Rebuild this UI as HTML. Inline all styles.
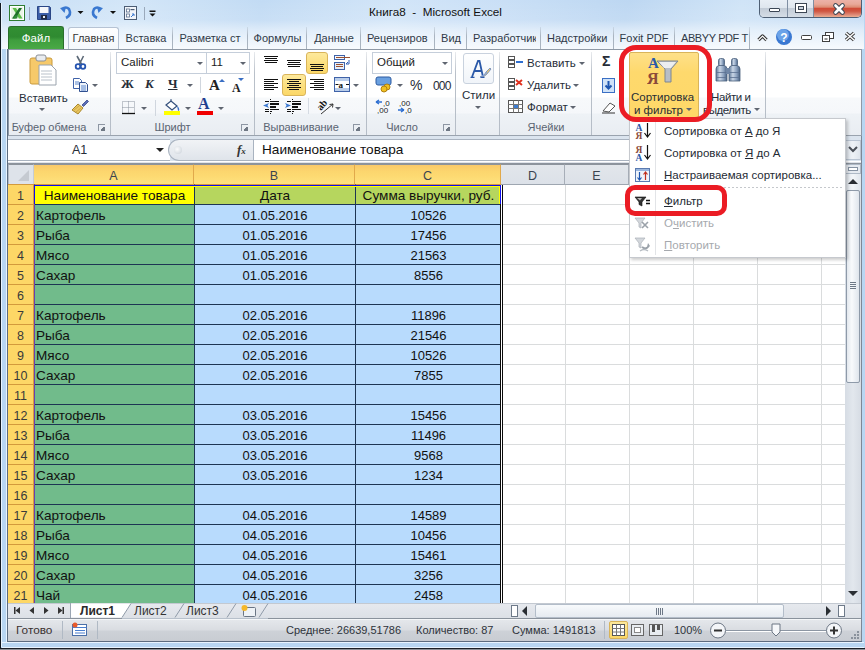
<!DOCTYPE html>
<html><head><meta charset="utf-8">
<style>
*{margin:0;padding:0;box-sizing:border-box}
html,body{width:865px;height:650px;overflow:hidden}
body{position:relative;font-family:"Liberation Sans",sans-serif;background:#c4d8ee;color:#1e1e1e}
.a{position:absolute}
#frame{position:absolute;left:0;top:0;width:865px;height:650px;background:#b8d6f2}
#titlebar{position:absolute;left:1px;top:0px;width:863px;height:49px;
 background:linear-gradient(180deg,rgba(255,255,255,0) 0px,rgba(255,255,255,0.1) 20px,rgba(255,255,255,0.45) 30px,rgba(255,255,255,0.85) 49px),
 linear-gradient(100deg,#c8dff5 0%,#d3e6f8 15%,#c2dbf4 30%,#d2e5f8 45%,#c9dff6 58%,#bdd7f2 72%,#d0e4f7 85%,#c6ddf5 100%)}
.title{position:absolute;top:5px;left:3px;width:865px;text-align:center;font-size:11.7px;color:#111}
/* tabs */
.tab{position:absolute;top:28px;height:21px;font-size:11px;color:#303a48;text-align:center;line-height:20px;white-space:nowrap;overflow:hidden}
.tsep{position:absolute;top:27px;width:1px;height:22px;background:linear-gradient(180deg,rgba(169,180,192,0.3),#a9b4c0 40%)}
#filetab{position:absolute;left:8px;top:26px;width:56px;height:23px;border-radius:3px 3px 0 0;
 background:linear-gradient(180deg,#328f33 0%,#2f8a31 45%,#3f9e3e 60%,#4aa946 100%);border:1px solid #2a6f2c;border-bottom:none;color:#fff;font-size:11.5px;text-align:center;line-height:22px}
#hometab{position:absolute;left:68px;top:27px;width:51px;height:23px;background:linear-gradient(180deg,#fdfeff,#f4f8fc);border:1px solid #b6c3d4;border-bottom:none;border-radius:3px 3px 0 0;font-size:11px;color:#333;text-align:center;line-height:21px}
/* ribbon */
#ribbon{position:absolute;left:8px;top:49px;width:854px;height:87px;border:1px solid #8e99a6;border-bottom-color:#9aa3ae;
 background:linear-gradient(180deg,#ffffff 0px,#ffffff 47px,#f7f9fb 48px,#f5f7fa 63px,#eef2f6 64px,#e9edf2 85px)}
.gsep{position:absolute;top:52px;width:1px;height:83px;background:linear-gradient(180deg,rgba(180,188,198,0.3),#b9c0c9 25%,#b5bdc7 100%)}
.glabel{position:absolute;top:120px;height:14px;font-size:11px;color:#5a6472;text-align:center;line-height:14px;white-space:nowrap}
.launch{position:absolute;top:124px;width:7px;height:7px;border-left:1px solid #8d96a3;border-top:1px solid #8d96a3}
.launch:after{content:"";position:absolute;left:2px;top:2px;width:4px;height:4px;background:linear-gradient(135deg,transparent 0,transparent 30%,#6f7884 30%)}
.rt{position:absolute;font-size:11.5px;color:#262d38;white-space:nowrap;line-height:14px}
.dd{position:absolute;width:0;height:0;border-left:3.5px solid transparent;border-right:3.5px solid transparent;border-top:3.5px solid #5f6570}
.combo{position:absolute;height:22px;border:1px solid #c5ceda;background:#fff;font-size:11.5px;line-height:19px;padding-left:4px;color:#1b1b1b}
.hl{position:absolute;background:linear-gradient(180deg,#fde99c,#fbd767);border:1px solid #d9b45a;border-radius:2px}
/* formula bar */
#fbar{position:absolute;left:8px;top:136px;width:853px;height:28px;background:#dbe4ee}
#namebox{position:absolute;left:8px;top:139px;width:162px;height:22px;background:#fff;border:1px solid #a9b3c0;border-left:none;border-right:none}
#fxarea{position:absolute;left:168px;top:139px;width:86px;height:22px;background:linear-gradient(180deg,#f1f3f6,#dfe4ea);border:1px solid #a9b3c0;border-right:none;border-radius:11px 0 0 11px}
#finput{position:absolute;left:253px;top:139px;width:592px;height:22px;background:#fff;border:1px solid #a9b3c0}
/* grid */
#gridbg{position:absolute;left:8px;top:164px;width:837px;height:440px;background:#fff;
 background-image:linear-gradient(90deg,#dadcdd 1px,transparent 1px),linear-gradient(180deg,#dadcdd 1px,transparent 1px);
 background-size:64px 20px,64px 20px;background-position:493px 0,0 0}
.rh{position:absolute;left:8px;width:26px;height:21px;background:#fdd766;border-top:1px solid #d39a3c;border-right:1px solid #d39a3c;font-size:12.5px;color:#3a3a3a;text-align:center;line-height:19px;padding-top:2px;margin-top:-1px}
.ch{position:absolute;top:164px;height:21px;padding-top:1px;border-top:1px solid #8c939c;background:linear-gradient(180deg,#e2e6eb,#dce1e8);border-right:1px solid #a7aeb8;border-bottom:1px solid #9ea6b0;font-size:12.5px;color:#3c4450;text-align:center;line-height:20px}
.ch.sel{background:linear-gradient(180deg,#f9c96a 0%,#fcd66e 35%,#fdda72 60%,#fee27f 100%);border-right:1px solid #e1a94b;border-bottom:1px solid #d59a3b}
.c{position:absolute;height:21px;margin-top:-1px;border:1px solid #1d3553;border-right:none;font-size:13px;line-height:19px;padding-top:1px;color:#111;white-space:nowrap;overflow:hidden}
.cA{background:#71bb8b;border-left-color:#6a3fb0;padding-left:1px;margin-left:0;font-size:13.6px}
.cB{background:#b8dbfd;text-align:center}
.hA1{background:#ffff00 padding-box;border-top-color:transparent;text-align:center;font-size:13.6px}
.hB1{background:#b6d65e padding-box;border-top-color:transparent;text-align:center;font-size:13.6px}
/* scrollbars */
#vscroll{position:absolute;left:845px;top:164px;width:16px;height:440px;background:linear-gradient(90deg,#d6dce4,#e2e7ed 50%,#d6dce4)}
#hbar{position:absolute;left:8px;top:603px;width:853px;height:16px;border-top:1px solid #c3c9d1;border-bottom:1px solid #8a929c;background:linear-gradient(180deg,#e6e9ee,#dce0e6)}
#status{position:absolute;left:8px;top:619px;width:853px;height:22px;border-top:1px solid #f4f6f8;
 background:linear-gradient(180deg,#e4e7eb 0%,#dadde2 45%,#cdd1d7 55%,#c8ccd2 100%)}
.st{position:absolute;top:623px;font-size:11px;color:#2e333a;white-space:nowrap;line-height:14px}
/* menu */
#menu{position:absolute;left:629px;top:118px;width:217px;height:140px;background:#fff;border:1px solid #c6c9ce;box-shadow:2px 2px 3px rgba(0,0,0,0.2)}
#menu .icol{position:absolute;left:25px;top:2px;width:1px;height:134px;background:#e2e4e7}
.mi{position:absolute;left:664px;font-size:11.5px;color:#242a33;white-space:nowrap;line-height:14px}
.mi.dis{color:#a6a9ae}
.u{text-decoration:underline}
.ring{position:absolute;border:4px solid #eb1c24;border-radius:16px}
</style></head><body>
<div id="frame"></div>

<div id="titlebar"></div>
<div class="a" style="left:0;top:3px;width:1px;height:645px;background:#111820"></div>
<div class="a" style="left:1px;top:3px;width:1px;height:644px;background:#e8f4ff"></div>
<div class="a" style="left:6px;top:49px;width:1px;height:593px;background:#e8f4ff"></div>
<div class="a" style="left:7px;top:49px;width:1px;height:593px;background:#5c6c80"></div>
<div class="a" style="left:861px;top:49px;width:1px;height:593px;background:#7d8896"></div>

<div class="a" style="left:7px;top:641px;width:855px;height:1px;background:#5c6c80"></div>
<div class="a" style="left:2px;top:642px;width:862px;height:1px;background:#e8f4ff"></div>
<div class="a" style="left:2px;top:647px;width:862px;height:1px;background:#e8f4ff"></div>
<div class="a" style="left:0;top:648px;width:865px;height:1px;background:#1a1f26"></div>
<div class="a" style="left:0;top:649px;width:865px;height:1px;background:#8a8f96"></div>
<div class="title">Книга8&nbsp; - &nbsp;Microsoft Excel</div>

<!-- quick access -->
<svg class="a" style="left:0;top:0" width="165" height="24" viewBox="0 0 165 24">
 <rect x="9.5" y="5.5" width="15" height="15" fill="#eaf4e6" stroke="#2e7d32"/>
 <rect x="10.5" y="6.5" width="13" height="13" fill="none" stroke="#fff"/>
 <path d="M12.5 8 h3.5 l6.5 10.5 h-3.5z" fill="#5cbc48"/><path d="M22 8 h-3 l-7 10.5 h3.5z" fill="#1f6e2a"/><path d="M13 18.5 l2 -3 h3 l-1 3z" fill="#2e8a38"/>
 <rect x="29" y="7" width="1" height="13" fill="#9aa9bb"/>
 <path d="M37.5 6.5 h12 l1 1 v12 h-13z" fill="#3b5ea8" stroke="#2a4686"/>
 <rect x="39.5" y="7" width="9" height="6" fill="#f4f6fa"/>
 <rect x="41" y="15" width="6" height="4.5" fill="#1e2a44"/><rect x="43" y="16" width="2" height="2" fill="#e9eef6"/>
 <path d="M66 18 q6 -3 3 -9 q-3 -3 -7 0" fill="none" stroke="#3a78d0" stroke-width="2.6"/>
 <path d="M60 8 l6 -1 -1.5 6z" fill="#3a78d0"/>
 <path d="M77.5 11 h6 l-3 3z" fill="#111"/>
 <path d="M97 18 q-6 -3 -3 -9 q3 -3 7 0" fill="none" stroke="#3a78d0" stroke-width="2.6"/>
 <path d="M103 8 l-6 -1 1.5 6z" fill="#3a78d0"/>
 <path d="M110 11 h6 l-3 3z" fill="#111"/>
 <rect x="124.5" y="6.5" width="12" height="13" fill="#f2f5fa" stroke="#4b5c74"/>
 <rect x="126.5" y="9" width="3" height="3" fill="#fff" stroke="#5a6f8c" stroke-width="0.8"/><rect x="130.5" y="9" width="4" height="1.2" fill="#4b5c74"/>
 <rect x="126.5" y="14" width="3" height="3" fill="#fff" stroke="#5a6f8c" stroke-width="0.8"/>
 <path d="M131 17 l3 -3 M132 14 h2 v2" stroke="#3a78d0" fill="none"/>
 <rect x="144" y="7" width="1" height="13" fill="#9aa9bb"/>
 <rect x="149.5" y="10.5" width="6" height="1.5" fill="#111"/><path d="M149.5 13.5 h6 l-3 3z" fill="#111"/>
</svg>

<!-- window buttons -->
<div class="a" style="left:759px;top:0;width:103px;height:18px;border:1px solid #4e5f74;border-top:none;border-radius:0 0 5px 5px;overflow:hidden">
 <div class="a" style="left:0;top:0;width:28px;height:17px;background:linear-gradient(180deg,#e8eef5 0%,#dfe6ee 45%,#c3ccd7 50%,#d5dde6 100%);border-right:1px solid #7f8ea2"></div>
 <div class="a" style="left:28px;top:0;width:26px;height:17px;background:linear-gradient(180deg,#e8eef5 0%,#dfe6ee 45%,#c3ccd7 50%,#d5dde6 100%);border-right:1px solid #7f8ea2"></div>
 <div class="a" style="left:54px;top:0;width:48px;height:17px;background:linear-gradient(180deg,#ecb2a8 0%,#e8a898 25%,#dd8c74 42%,#d04c38 50%,#cf5540 65%,#dd8673 85%,#ecae90 100%)"></div>
 <div class="a" style="left:9px;top:8px;width:11px;height:4px;background:#fff;border:1px solid #3c4654;border-radius:1px"></div>
 <div class="a" style="left:35px;top:3px;width:12px;height:10px;background:#fff;border:1px solid #3c4654"></div>
 <div class="a" style="left:38px;top:6px;width:6px;height:4px;background:#c9d2dc;border:1px solid #3c4654"></div>
 <svg class="a" style="left:72px;top:2px" width="16" height="14" viewBox="0 0 16 14"><path d="M3.5 3.5 L10.5 10.5 M10.5 3.5 L3.5 10.5" stroke="#3c4654" stroke-width="4.6" stroke-linecap="round"/><path d="M3.5 3.5 L10.5 10.5 M10.5 3.5 L3.5 10.5" stroke="#fff" stroke-width="2.6" stroke-linecap="round"/></svg>
</div>

<!-- tabs -->
<div id="filetab">Файл</div>
<div id="hometab">Главная</div>
<div class="tab" style="left:119px;width:54px">Вставка</div>
<div class="tsep" style="left:172px"></div>
<div class="tab" style="left:173px;width:74px">Разметка ст</div>
<div class="tsep" style="left:247px"></div>
<div class="tab" style="left:248px;width:59px">Формулы</div>
<div class="tsep" style="left:306px"></div>
<div class="tab" style="left:307px;width:54px">Данные</div>
<div class="tsep" style="left:360px"></div>
<div class="tab" style="left:361px;width:73px;text-align:left;padding-left:6px">Рецензиров</div>
<div class="tsep" style="left:434px"></div>
<div class="tab" style="left:435px;width:32px">Вид</div>
<div class="tsep" style="left:466px"></div>
<div class="tab" style="left:467px;width:69px;text-align:left;padding-left:6px">Разработчик</div>
<div class="tsep" style="left:540px"></div>
<div class="tab" style="left:541px;width:73px;text-align:left;padding-left:6px">Надстройки</div>
<div class="tsep" style="left:613px"></div>
<div class="tab" style="left:614px;width:60px">Foxit PDF</div>
<div class="tsep" style="left:674px"></div>
<div class="tab" style="left:675px;width:74px;text-align:left;padding-left:6px;letter-spacing:-0.4px">ABBYY PDF T</div>
<div class="tsep" style="left:749px"></div>
<!-- tab row icons -->
<svg class="a" style="left:752px;top:28px" width="110" height="20" viewBox="0 0 110 20">
 <path d="M6.5 12 l4 -4 4 4" fill="none" stroke="#303030" stroke-width="3.2" stroke-linejoin="round"/>
 <path d="M6.5 12 l4 -4 4 4" fill="none" stroke="#fff" stroke-width="1.2"/>
 <circle cx="32" cy="9" r="8" fill="#3a78d2"/><circle cx="31" cy="7" r="6" fill="#6aa2e8"/>
 <text x="32" y="13.5" font-size="12" font-weight="bold" fill="#fff" text-anchor="middle" font-family="Liberation Sans">?</text>
 <rect x="49.5" y="7.5" width="10" height="4" fill="#fff" stroke="#404040" rx="1"/>
 <rect x="73.5" y="4.5" width="8" height="6" fill="#fff" stroke="#404040"/>
 <rect x="70.5" y="7.5" width="7" height="6" fill="#fff" stroke="#404040"/>
 <rect x="72.5" y="10" width="3" height="2" fill="#909090"/>
 <path d="M94 5 L102 12 M102 5 L94 12" stroke="#404040" stroke-width="3.4"/>
 <path d="M94 5 L102 12 M102 5 L94 12" stroke="#fff" stroke-width="1.4"/>
</svg>

<div id="ribbon"></div>
<!-- group separators -->
<div class="gsep" style="left:110px"></div>
<div class="gsep" style="left:254px"></div>
<div class="gsep" style="left:366px"></div>
<div class="gsep" style="left:455px"></div>
<div class="gsep" style="left:499px"></div>
<div class="gsep" style="left:591px"></div>
<div class="gsep" style="left:765px"></div>

<!-- clipboard group -->
<svg class="a" style="left:28px;top:54px" width="30" height="32" viewBox="0 0 30 32">
 <rect x="2" y="4" width="22" height="26" rx="2" fill="#f6c96a" stroke="#c99a3c"/>
 <rect x="8" y="1" width="10" height="6" rx="2" fill="#e9ecf0" stroke="#8a8f96"/>
 <path d="M11 11 h12 l5 5 v15 h-17z" fill="#fff" stroke="#9aa3ad"/>
 <path d="M13 17h11M13 20h11M13 23h11M13 26h11" stroke="#b9c1ca"/>
</svg>
<div class="rt" style="left:19px;top:91px">Вставить</div>
<div class="dd" style="left:39px;top:108px"></div>
<svg class="a" style="left:72px;top:54px" width="18" height="18" viewBox="0 0 18 18">
 <path d="M5 2 L10 11 M11.5 2 L7 11" stroke="#5d6a78" stroke-width="1.6"/>
 <circle cx="6" cy="12.5" r="2.3" fill="none" stroke="#2554b0" stroke-width="1.8"/>
 <circle cx="11" cy="12.5" r="2.3" fill="none" stroke="#2554b0" stroke-width="1.8"/>
</svg>
<svg class="a" style="left:72px;top:77px" width="18" height="16" viewBox="0 0 18 16">
 <path d="M1.5 1.5 h6 l2 2 v8 h-8z" fill="#fff" stroke="#3f62a8"/>
 <path d="M7.5 5.5 h6 l2 2 v7 h-8z" fill="#eef3fb" stroke="#2f4f90"/>
 <path d="M3 5h4M3 7h4M9 9h5M9 11h5M9 13h5" stroke="#5a86cc"/>
</svg>
<div class="dd" style="left:92px;top:84px"></div>
<svg class="a" style="left:71px;top:99px" width="18" height="16" viewBox="0 0 18 16">
 <path d="M11 6 l5 -5 1.5 1.5 -5 5z" fill="#5a6db8" stroke="#3a4a8a" stroke-width="0.8"/>
 <path d="M1 11 l6 -6 5 4 -5 6z" fill="#e9c660" stroke="#a8862a"/>
 <path d="M3 11 l5 -4 M5 13 l5 -4" stroke="#c9a040" stroke-width="0.8"/>
</svg>
<div class="glabel" style="left:9px;width:80px">Буфер обмена</div>
<div class="launch" style="left:98px"></div>

<!-- font group -->
<div class="combo" style="left:116px;top:52px;width:91px">Calibri</div>
<div class="dd" style="left:197px;top:62px"></div>
<div class="combo" style="left:206px;top:52px;width:44px">11</div>
<div class="dd" style="left:240px;top:62px"></div>
<div class="rt" style="left:121px;top:77px;font-weight:bold;font-size:13px;font-family:'Liberation Serif',serif">Ж</div>
<div class="rt" style="left:145px;top:77px;font-style:italic;font-weight:bold;font-size:13px;font-family:'Liberation Serif',serif">К</div>
<div class="rt" style="left:168px;top:77px;font-size:13px;font-weight:bold;font-family:'Liberation Serif',serif;text-decoration:underline">Ч</div>
<div class="dd" style="left:187px;top:84px"></div>
<div class="a" style="left:200px;top:77px;width:1px;height:16px;background:#d0d6de"></div>
<div class="rt" style="left:209px;top:78px;font-size:15px;font-weight:bold;font-family:'Liberation Serif',serif;color:#222">A</div>
<div class="rt" style="left:232px;top:81px;font-size:12px;font-weight:bold;font-family:'Liberation Serif',serif;color:#222">A</div>
<svg class="a" style="left:217px;top:77px" width="30" height="6"><path d="M2 5 l3 -3 3 3z" fill="#3a6fc4"/><path d="M21 1 l6 0 -3 3z" fill="#3a6fc4"/></svg>
<svg class="a" style="left:121px;top:100px" width="16" height="15" viewBox="0 0 16 15">
 <path d="M1.5 1.5h12v12h-12z M7.5 1.5v12 M1.5 7.5h12" fill="none" stroke="#8a939e" stroke-dasharray="1 1"/>
 <path d="M1 13.5h13" stroke="#111" stroke-width="1.3"/>
</svg>
<div class="dd" style="left:141px;top:107px"></div>
<div class="a" style="left:155px;top:100px;width:1px;height:16px;background:#d0d6de"></div>
<svg class="a" style="left:163px;top:98px" width="18" height="18" viewBox="0 0 18 18">
 <path d="M3 7 l5 -4 6 5 -5 4z" fill="#fff" stroke="#34507c" stroke-width="1.2"/>
 <path d="M8 3 v-2" stroke="#34507c"/>
 <path d="M14 8 q3 2 2 5 l-1 -0.5z" fill="#3a6fc4"/>
 <rect x="1" y="13" width="16" height="4" fill="#ffff00"/>
</svg>
<div class="dd" style="left:185px;top:107px"></div>
<div class="rt" style="left:198px;top:97px;font-size:16px;font-weight:bold;font-family:'Liberation Serif',serif;color:#1f3f8f">A</div>
<div class="a" style="left:197px;top:111px;width:16px;height:4px;background:#f00000"></div>
<div class="dd" style="left:218px;top:107px"></div>
<div class="glabel" style="left:150px;width:45px">Шрифт</div>
<div class="launch" style="left:241px"></div>

<!-- alignment -->
<div class="hl" style="left:306px;top:52px;width:22px;height:22px;border-radius:3px"></div>
<div class="hl" style="left:282px;top:74px;width:24px;height:22px;border-radius:3px"></div>
<svg class="a" style="left:254px;top:48px" width="112" height="72" viewBox="0 0 112 72">
 <path d="M10 8.5h14 M11.0 10.5h12 M10 12.5h14 M11.0 14.5h12 M33 12.5h14 M34.0 14.5h12 M33 16.5h14 M34.0 18.5h12 M56 16.5h14 M57.0 18.5h12 M56 20.5h14 M57.0 22.5h12" stroke="#111"/>
 <path d="M10 31.5h14 M10 33.5h10 M10 35.5h14 M10 37.5h10 M10 39.5h14 M10 41.5h10 M33 31.5h14 M35.0 33.5h10 M33 35.5h14 M35.0 37.5h10 M33 39.5h14 M35.0 41.5h10 M56 31.5h14 M60 33.5h10 M56 35.5h14 M60 37.5h10 M56 39.5h14 M60 41.5h10" stroke="#111"/>
 <rect x="80.5" y="7.5" width="10" height="4" fill="#f4f7fb" stroke="#3f62a8"/>
 <path d="M82 9.5h14" stroke="#9a5030"/>
 <rect x="80.5" y="14.5" width="10" height="7" fill="#e7eef8" stroke="#3f62a8"/>
 <path d="M82 16.5h7M82 18.5h7" stroke="#9a5030"/>
 <path d="M95 12 v4 h-3 M92 16 l2 -2" stroke="#2f5fb8" fill="none"/>
 <rect x="80.5" y="29.5" width="15" height="14" fill="#fff" stroke="#3f62a8"/>
 <rect x="81" y="30" width="14" height="3" fill="#b9cdea"/><rect x="81" y="40" width="14" height="3" fill="#b9cdea"/>
 <text x="84.5" y="40" font-size="9" font-weight="bold" font-family="Liberation Serif" fill="#111">a</text>
 <path d="M81.5 36.5h3 M92 36.5h3" stroke="#111"/>
 <rect x="16" y="51" width="1" height="1" fill="#111"/><rect x="16" y="65" width="1" height="1" fill="#111"/> <rect x="11" y="53" width="4" height="1" fill="#111"/><rect x="11" y="61" width="4" height="1" fill="#111"/><rect x="11" y="63" width="4" height="1" fill="#111"/> <rect x="16" y="53" width="9" height="1" fill="#111"/><rect x="16" y="55" width="9" height="2" fill="#111"/><rect x="16" y="58" width="6" height="2" fill="#111"/><rect x="16" y="61" width="9" height="1" fill="#111"/><rect x="16" y="63" width="2" height="1" fill="#111"/> <path d="M15 55 l-6 2.5 6 2.5 -1.5 -2.5z" fill="#3a78d0"/>
 <rect x="38" y="51" width="1" height="1" fill="#111"/><rect x="38" y="65" width="1" height="1" fill="#111"/> <rect x="33" y="53" width="4" height="1" fill="#111"/><rect x="33" y="61" width="4" height="1" fill="#111"/><rect x="33" y="63" width="4" height="1" fill="#111"/> <rect x="38" y="53" width="9" height="1" fill="#111"/><rect x="38" y="55" width="9" height="2" fill="#111"/><rect x="38" y="58" width="6" height="2" fill="#111"/><rect x="38" y="61" width="9" height="1" fill="#111"/><rect x="38" y="63" width="2" height="1" fill="#111"/> <path d="M31 55 l6 2.5 -6 2.5 1.5 -2.5z" fill="#3a78d0"/>
 <path d="M54.5 50 v16" stroke="#d5dbe3"/>
 <text x="0" y="0" font-size="10" font-weight="bold" font-family="Liberation Serif" fill="#111" transform="translate(67 63) rotate(-50)">ab</text>
 <path d="M67 66 l12 -10 M79 56 l-3.5 0.5 M79 56 l-0.5 3.5" stroke="#333" fill="none"/>
</svg>
<div class="dd" style="left:353px;top:84px"></div>
<div class="dd" style="left:335px;top:107px"></div>
<div class="glabel" style="left:258px;width:86px">Выравнивание</div>
<div class="launch" style="left:353px"></div>

<!-- number -->
<div class="combo" style="left:372px;top:52px;width:80px">Общий</div>
<div class="dd" style="left:442px;top:62px"></div>
<svg class="a" style="left:375px;top:76px" width="20" height="17" viewBox="0 0 20 17">
 <rect x="1" y="1" width="15" height="8" rx="2" fill="#6aa0e0" stroke="#2c5aa0"/>
 <circle cx="12" cy="11" r="3" fill="#f0c020" stroke="#b08010"/><circle cx="9" cy="13" r="3" fill="#f0c020" stroke="#b08010"/>
</svg>
<div class="dd" style="left:397px;top:84px"></div>
<div class="rt" style="left:410px;top:78px;font-size:14px">%</div>
<div class="rt" style="left:433px;top:79px;font-size:12px;letter-spacing:-0.8px">000</div>
<svg class="a" style="left:374px;top:98px" width="42" height="16" viewBox="0 0 42 16">
 <path d="M2 4 h6 M2 4 l3 -2 M2 4 l3 2" stroke="#2e6fd1" stroke-width="1.5" fill="none"/>
 <text x="9" y="8" font-size="8" font-family="Liberation Sans" fill="#222">,0</text>
 <text x="3" y="15" font-size="8" font-family="Liberation Sans" fill="#222">,00</text>
 <text x="25" y="8" font-size="8" font-family="Liberation Sans" fill="#222">,00</text>
 <path d="M24 12 h6 M30 12 l-3 -2 M30 12 l-3 2" stroke="#2e6fd1" stroke-width="1.5" fill="none"/>
 <text x="31" y="15" font-size="8" font-family="Liberation Sans" fill="#222">,0</text>
</svg>
<div class="glabel" style="left:385px;width:34px">Число</div>
<div class="launch" style="left:443px"></div>

<!-- styles -->
<div class="a" style="left:463px;top:53px;width:31px;height:31px;border:1px solid #c9d2de;border-radius:3px;background:linear-gradient(180deg,#fff,#f0f4f9)"></div>
<svg class="a" style="left:468px;top:58px" width="24" height="22" viewBox="0 0 24 22">
 <path d="M4 19 L10 3 L11.5 3 L15 19 M6.5 13 h7" fill="none" stroke="#2a58a8" stroke-width="1.8"/>
 <path d="M2.5 19.3 h4 M12.5 19.3 h4" stroke="#2a58a8" stroke-width="1.2"/>
 <path d="M12 19 q5 -1 6 -5 l4 -4 1 1 -4 5 q-2 3 -7 3z" fill="#e8c870" stroke="#6a86c0" stroke-width="0.8"/>
 <path d="M14 18 q4 -1 5 -4" stroke="#7aa0e0" fill="none"/>
</svg>
<div class="rt" style="left:462px;top:88px">Стили</div>
<div class="dd" style="left:475px;top:106px"></div>

<!-- cells -->
<svg class="a" style="left:507px;top:55px" width="18" height="60" viewBox="0 0 18 60">
 <rect x="1.5" y="1.5" width="6" height="3" fill="#fff" stroke="#555"/><rect x="1.5" y="5.5" width="6" height="3" fill="#fff" stroke="#555"/><rect x="1.5" y="9.5" width="6" height="3" fill="#fff" stroke="#555"/>
 <path d="M9 7h7" stroke="#2e6fd1" stroke-width="2"/>
 <rect x="1.5" y="23.5" width="6" height="3" fill="#fff" stroke="#555"/><rect x="1.5" y="27.5" width="6" height="3" fill="#fff" stroke="#555"/><rect x="1.5" y="31.5" width="6" height="3" fill="#fff" stroke="#555"/>
 <path d="M9 25l6 5M15 25l-6 5" stroke="#e0301e" stroke-width="2"/>
 <rect x="1.5" y="45.5" width="14" height="12" fill="#fff" stroke="#555"/>
 <path d="M1.5 49.5h14M1.5 53.5h14M6.5 45.5v12M11.5 45.5v12" stroke="#777"/>
 <rect x="7" y="50" width="4" height="3" fill="#3d7cd0"/>
</svg>
<div class="rt" style="left:527px;top:56px">Вставить</div><div class="dd" style="left:579px;top:62px"></div>
<div class="rt" style="left:527px;top:78px">Удалить</div><div class="dd" style="left:573px;top:84px"></div>
<div class="rt" style="left:527px;top:100px">Формат</div><div class="dd" style="left:570px;top:106px"></div>
<div class="glabel" style="left:524px;width:44px">Ячейки</div>

<!-- editing -->
<div class="rt" style="left:602px;top:54px;font-size:14px;font-weight:bold">Σ</div>
<svg class="a" style="left:601px;top:77px" width="20" height="40" viewBox="0 0 20 40">
 <rect x="1.5" y="1.5" width="12" height="14" fill="#cfe2f8" stroke="#3a6fc4"/>
 <path d="M7.5 4v7M4.5 8.5l3 3 3-3" stroke="#1d55b0" stroke-width="2" fill="none"/>
 <path d="M2 34 l7 -8 5 3 -6 6z" fill="#fff" stroke="#555"/><path d="M1 36h13" stroke="#333"/>
</svg>

<!-- sort & filter button -->
<div class="hl" style="left:629px;top:52px;width:70px;height:66px;border-color:#d9b45a;background:linear-gradient(180deg,#fee089 0%,#fed96d 30%,#fed868 100%)"></div>
<svg class="a" style="left:647px;top:55px" width="34" height="30" viewBox="0 0 34 30">
 <path d="M10 6 h21 l-7 8 v13 h-6 v-13z" fill="#b8bec6" stroke="#7f8790"/>
 <path d="M12 7 h17 l-5 6 h-7z" fill="#eceef0"/>
 <text x="1" y="13" font-size="15" font-family="Liberation Serif" font-weight="bold" fill="#2a5aa8">A</text>
 <text x="0" y="29" font-size="16" font-family="Liberation Serif" font-weight="bold" fill="#8a4a3a">Я</text>
</svg>
<div class="rt" style="left:631px;top:90px;color:#272d35">Сортировка</div>
<div class="rt" style="left:634px;top:103px;color:#272d35">и фильтр</div>
<div class="dd" style="left:686px;top:108px"></div>
<svg class="a" style="left:714px;top:57px" width="29" height="26" viewBox="0 0 29 26">
 <defs><linearGradient id="bn" x1="0" x2="1" y1="0" y2="0"><stop offset="0" stop-color="#5d7696"/><stop offset="0.35" stop-color="#c9d6e6"/><stop offset="0.7" stop-color="#8aa0bd"/><stop offset="1" stop-color="#4a6283"/></linearGradient></defs>
 <rect x="4.5" y="1.5" width="6" height="8" rx="2" fill="url(#bn)" stroke="#4a5f7c" stroke-width="0.8"/>
 <rect x="17.5" y="1.5" width="6" height="8" rx="2" fill="url(#bn)" stroke="#4a5f7c" stroke-width="0.8"/>
 <path d="M2 12 q0 -3 3 -3.5 h5 q3 0.5 3 3.5 v12 h-11z" fill="url(#bn)" stroke="#4a5f7c" stroke-width="0.8"/>
 <path d="M15 12 q0 -3 3 -3.5 h5 q3 0.5 3 3.5 v12 h-11z" fill="url(#bn)" stroke="#4a5f7c" stroke-width="0.8"/>
 <rect x="12" y="11" width="4" height="6" fill="#6f86a6"/>
 <path d="M2.5 15.5h10M15.5 15.5h10M2.5 20.5h10M15.5 20.5h10" stroke="#5a7090" stroke-width="0.8"/>
</svg>
<div class="rt" style="left:711px;top:90px;letter-spacing:-0.4px">Найти и</div>
<div class="rt" style="left:703px;top:103px;letter-spacing:-0.45px">выделить</div>
<div class="dd" style="left:754px;top:108px"></div>

<!-- formula bar -->
<div id="fbar"></div>
<div id="namebox"></div>
<div class="rt" style="left:72px;top:143px;font-size:12.5px">A1</div>
<div class="dd" style="left:156px;top:148px;border-width:4px 4px 0 4px;border-top-color:#222"></div>
<div id="fxarea"></div>
<div class="a" style="left:174px;top:146px;width:8px;height:8px;border-radius:4px;background:radial-gradient(circle at 40% 40%,#fafbfc,#c9d0d8)"></div>
<div class="rt" style="left:237px;top:143px;font-size:13px;font-family:'Liberation Serif',serif;font-style:italic;font-weight:bold;color:#333">f<span style="font-size:9px">x</span></div>
<div id="finput"></div>
<div class="rt" style="left:262px;top:143px;font-size:13.6px;color:#111">Наименование товара</div>
<div class="a" style="left:845px;top:140px;width:16px;height:20px;background:linear-gradient(90deg,#dfe5ec,#eef2f6,#dfe5ec);border:1px solid #b9c4d2"></div>
<svg class="a" style="left:848px;top:146px" width="10" height="8"><path d="M1 1 l4 4 4 -4" fill="none" stroke="#4a4f57" stroke-width="2"/></svg>
<div class="a" style="left:8px;top:161px;width:853px;height:3px;background:linear-gradient(180deg,#fff 0,#fff 1px,#dfe3ea 1px,#dfe3ea 2px,#8c939c 2px,#8c939c 3px)"></div>

<!-- grid -->
<div id="gridbg"></div>
<div class="a" style="left:8px;top:164px;width:26px;height:21px;background:#dee3ea;border-top:1px solid #8c939c;border-left:1px solid #b5bcc6;border-right:1px solid #c5ccd6;border-bottom:1px solid #a9b4c2"></div>
<svg class="a" style="left:17px;top:169px" width="14" height="13"><path d="M12 1 v11 h-11z" fill="#c5cad1"/></svg>
<div class="rh" style="top:185px">1</div>
<div class="rh" style="top:205px">2</div>
<div class="rh" style="top:225px">3</div>
<div class="rh" style="top:245px">4</div>
<div class="rh" style="top:265px">5</div>
<div class="rh" style="top:285px">6</div>
<div class="rh" style="top:305px">7</div>
<div class="rh" style="top:325px">8</div>
<div class="rh" style="top:345px">9</div>
<div class="rh" style="top:365px">10</div>
<div class="rh" style="top:385px">11</div>
<div class="rh" style="top:405px">12</div>
<div class="rh" style="top:425px">13</div>
<div class="rh" style="top:445px">14</div>
<div class="rh" style="top:465px">15</div>
<div class="rh" style="top:485px">16</div>
<div class="rh" style="top:505px">17</div>
<div class="rh" style="top:525px">18</div>
<div class="rh" style="top:545px">19</div>
<div class="rh" style="top:565px">20</div>
<div class="rh" style="top:585px">21</div>
<div class="ch sel" style="left:34px;width:160px">A</div>
<div class="ch sel" style="left:194px;width:161px">B</div>
<div class="ch sel" style="left:355px;width:146px">C</div>
<div class="ch" style="left:501px;width:64px">D</div>
<div class="ch" style="left:565px;width:64px">E</div>
<div class="ch" style="left:629px;width:64px">F</div>
<div class="ch" style="left:693px;width:64px">G</div>
<div class="ch" style="left:757px;width:64px">H</div>
<div class="ch" style="left:821px;width:24px">I</div>
<div class="c hA1" style="top:185px;left:34px;width:160px">Наименование товара</div>
<div class="c hB1" style="top:185px;left:194px;width:161px">Дата</div>
<div class="c hB1" style="top:185px;left:355px;width:146px">Сумма выручки, руб.</div>
<div class="c cA" style="top:205px;left:34px;width:160px">Картофель</div>
<div class="c cB" style="top:205px;left:194px;width:161px">01.05.2016</div>
<div class="c cB" style="top:205px;left:355px;width:146px">10526</div>
<div class="c cA" style="top:225px;left:34px;width:160px">Рыба</div>
<div class="c cB" style="top:225px;left:194px;width:161px">01.05.2016</div>
<div class="c cB" style="top:225px;left:355px;width:146px">17456</div>
<div class="c cA" style="top:245px;left:34px;width:160px">Мясо</div>
<div class="c cB" style="top:245px;left:194px;width:161px">01.05.2016</div>
<div class="c cB" style="top:245px;left:355px;width:146px">21563</div>
<div class="c cA" style="top:265px;left:34px;width:160px">Сахар</div>
<div class="c cB" style="top:265px;left:194px;width:161px">01.05.2016</div>
<div class="c cB" style="top:265px;left:355px;width:146px">8556</div>
<div class="c cA" style="top:285px;left:34px;width:160px"></div>
<div class="c cB" style="top:285px;left:194px;width:161px"></div>
<div class="c cB" style="top:285px;left:355px;width:146px"></div>
<div class="c cA" style="top:305px;left:34px;width:160px">Картофель</div>
<div class="c cB" style="top:305px;left:194px;width:161px">02.05.2016</div>
<div class="c cB" style="top:305px;left:355px;width:146px">11896</div>
<div class="c cA" style="top:325px;left:34px;width:160px">Рыба</div>
<div class="c cB" style="top:325px;left:194px;width:161px">02.05.2016</div>
<div class="c cB" style="top:325px;left:355px;width:146px">21546</div>
<div class="c cA" style="top:345px;left:34px;width:160px">Мясо</div>
<div class="c cB" style="top:345px;left:194px;width:161px">02.05.2016</div>
<div class="c cB" style="top:345px;left:355px;width:146px">10526</div>
<div class="c cA" style="top:365px;left:34px;width:160px">Сахар</div>
<div class="c cB" style="top:365px;left:194px;width:161px">02.05.2016</div>
<div class="c cB" style="top:365px;left:355px;width:146px">7855</div>
<div class="c cA" style="top:385px;left:34px;width:160px"></div>
<div class="c cB" style="top:385px;left:194px;width:161px"></div>
<div class="c cB" style="top:385px;left:355px;width:146px"></div>
<div class="c cA" style="top:405px;left:34px;width:160px">Картофель</div>
<div class="c cB" style="top:405px;left:194px;width:161px">03.05.2016</div>
<div class="c cB" style="top:405px;left:355px;width:146px">15456</div>
<div class="c cA" style="top:425px;left:34px;width:160px">Рыба</div>
<div class="c cB" style="top:425px;left:194px;width:161px">03.05.2016</div>
<div class="c cB" style="top:425px;left:355px;width:146px">11496</div>
<div class="c cA" style="top:445px;left:34px;width:160px">Мясо</div>
<div class="c cB" style="top:445px;left:194px;width:161px">03.05.2016</div>
<div class="c cB" style="top:445px;left:355px;width:146px">9568</div>
<div class="c cA" style="top:465px;left:34px;width:160px">Сахар</div>
<div class="c cB" style="top:465px;left:194px;width:161px">03.05.2016</div>
<div class="c cB" style="top:465px;left:355px;width:146px">1234</div>
<div class="c cA" style="top:485px;left:34px;width:160px"></div>
<div class="c cB" style="top:485px;left:194px;width:161px"></div>
<div class="c cB" style="top:485px;left:355px;width:146px"></div>
<div class="c cA" style="top:505px;left:34px;width:160px">Картофель</div>
<div class="c cB" style="top:505px;left:194px;width:161px">04.05.2016</div>
<div class="c cB" style="top:505px;left:355px;width:146px">14589</div>
<div class="c cA" style="top:525px;left:34px;width:160px">Рыба</div>
<div class="c cB" style="top:525px;left:194px;width:161px">04.05.2016</div>
<div class="c cB" style="top:525px;left:355px;width:146px">10456</div>
<div class="c cA" style="top:545px;left:34px;width:160px">Мясо</div>
<div class="c cB" style="top:545px;left:194px;width:161px">04.05.2016</div>
<div class="c cB" style="top:545px;left:355px;width:146px">15461</div>
<div class="c cA" style="top:565px;left:34px;width:160px">Сахар</div>
<div class="c cB" style="top:565px;left:194px;width:161px">04.05.2016</div>
<div class="c cB" style="top:565px;left:355px;width:146px">3256</div>
<div class="c cA" style="top:585px;left:34px;width:160px">Чай</div>
<div class="c cB" style="top:585px;left:194px;width:161px">04.05.2016</div>
<div class="c cB" style="top:585px;left:355px;width:146px">2458</div>
<div class="a" style="left:500px;top:204px;width:1px;height:400px;background:#0a0a0a"></div>
<div class="a" style="left:501px;top:185px;width:1px;height:419px;background:#fff"></div>
<div class="a" style="left:502px;top:185px;width:1px;height:419px;background:#0a0a0a"></div>
<div class="a" style="left:34px;top:185px;width:467px;height:19px;border:1px solid #0d0df0;border-width:1px 1px 0 1px;box-shadow:inset 0 1px 0 #ffff00,inset -1px 0 0 #ffff00"></div>
<div class="a" style="left:34px;top:204px;width:1px;height:400px;background:#6a3fb0"></div>

<!-- v scroll -->
<div id="vscroll"></div>
<div class="a" style="left:845px;top:164px;width:16px;height:10px;background:#e5eaf0;border:1px solid #aeb9c6"></div>
<div class="a" style="left:848px;top:167px;width:10px;height:4px;background:#fff;border:1px solid #8693a3"></div>
<div class="a" style="left:845px;top:174px;width:16px;height:16px;background:linear-gradient(90deg,#dfe5ec,#f2f5f8,#dfe5ec)"></div>
<svg class="a" style="left:848px;top:178px" width="10" height="8"><path d="M0 6 l5 -5 5 5z" fill="#2a2e33"/></svg>
<div class="a" style="left:846px;top:190px;width:14px;height:193px;border:1px solid #8e9aa9;border-radius:2px;background:linear-gradient(90deg,#e3e8ee,#f8fafc 40%,#dfe5ec)"></div>
<svg class="a" style="left:848px;top:281px" width="10" height="10"><path d="M2 1.5h6M2 3.5h6M2 5.5h6M2 7.5h6" stroke="#6d7886"/></svg>
<svg class="a" style="left:848px;top:590px" width="10" height="8"><path d="M0 1 l5 5 5 -5z" fill="#2a2e33"/></svg>

<!-- sheet tabs + h scroll -->
<div id="hbar"></div>
<svg class="a" style="left:0;top:600px" width="72" height="20" viewBox="0 0 72 20">
 <rect x="14" y="7" width="1.5" height="7" fill="#333"/><path d="M20 7 v7 l-4.5 -3.5z" fill="#333"/>
 <path d="M34 7 v7 l-4.5 -3.5z" fill="#333"/>
 <path d="M44 7 v7 l4.5 -3.5z" fill="#333"/>
 <path d="M58 7 v7 l4.5 -3.5z" fill="#333"/><rect x="62.5" y="7" width="1.5" height="7" fill="#333"/>
</svg>
<svg class="a" style="left:60px;top:603px" width="220" height="16" viewBox="0 0 220 16">
 <path d="M10 0.5 h61 l-9 14 h-52z" fill="#fff"/>
 <path d="M10.5 0 v15" stroke="#9aa5b3"/>
 <path d="M62 14.5 l9 -14 M115 14.5 l9 -14 M167 14.5 l9 -14 M199 14.5 l9 -14" stroke="#8f9aa8" fill="none"/>
 <path d="M62 15.5 h146" stroke="#b7c0cb"/>
</svg>
<div class="st" style="left:80px;top:604px;font-size:12px;font-weight:bold;color:#2a2a2a">Лист1</div>
<div class="st" style="left:134px;top:604px;font-size:12px;color:#333">Лист2</div>
<div class="st" style="left:186px;top:604px;font-size:12px;color:#333">Лист3</div>
<svg class="a" style="left:240px;top:604px" width="17" height="14"><rect x="3.5" y="3.5" width="12" height="9" rx="1" fill="#eef2f6" stroke="#6a7584"/><circle cx="4.5" cy="4" r="3" fill="#f5b82a"/></svg>
<div class="a" style="left:511px;top:605px;width:7px;height:12px;border:1px solid #6e7a89;background:#fff"></div>
<svg class="a" style="left:521px;top:606px" width="8" height="10"><path d="M6 0 l-5 5 5 5z" fill="#2a2e33"/></svg>
<div class="a" style="left:535px;top:604px;width:249px;height:14px;border:1px solid #b3bdc9;border-radius:2px;background:linear-gradient(180deg,#f8fafc,#e6ebf1)"></div>
<svg class="a" style="left:655px;top:607px" width="10" height="9"><path d="M1.5 1v7M3.5 1v7M5.5 1v7M7.5 1v7" stroke="#6d7886"/></svg>
<svg class="a" style="left:825px;top:606px" width="8" height="10"><path d="M1 0 l5 5 -5 5z" fill="#2a2e33"/></svg>
<div class="a" style="left:838px;top:605px;width:7px;height:12px;border:1px solid #6e7a89;background:#fff"></div>

<!-- status bar -->
<div id="status"></div>
<div class="st" style="left:16px;font-size:11.8px;color:#3a3030">Готово</div>
<div class="a" style="left:62px;top:621px;width:1px;height:18px;background:#b0b9c4"></div>
<svg class="a" style="left:72px;top:622px" width="16" height="14"><rect x="0.5" y="2.5" width="14" height="11" fill="#fff" stroke="#4a6fa8"/><path d="M0.5 5.5h14M3 8.5h10M3 11h10" stroke="#4a7fcf"/><circle cx="3" cy="3" r="2.5" fill="#e85a2a"/></svg>
<div class="a" style="left:97px;top:621px;width:1px;height:18px;background:#b0b9c4"></div>
<div class="st" style="left:286px">Среднее: 26639,51786</div>
<div class="st" style="left:416px">Количество: 87</div>
<div class="st" style="left:512px">Сумма: 1491813</div>
<div class="a" style="left:604px;top:621px;width:1px;height:18px;background:#b0b9c4"></div>
<div class="hl" style="left:609px;top:621px;width:19px;height:18px"></div>
<svg class="a" style="left:612px;top:624px" width="60" height="13" viewBox="0 0 60 13">
 <rect x="0.5" y="0.5" width="12" height="11" fill="#fff" stroke="#555"/><path d="M0.5 4.5h12M0.5 8h12M4.5 0.5v11M8.5 0.5v11" stroke="#777"/>
 <rect x="19.5" y="0.5" width="12" height="11" fill="#e8ecf0" stroke="#666"/><rect x="22.5" y="3.5" width="6" height="5" fill="#fff" stroke="#888"/>
 <rect x="37.5" y="0.5" width="13" height="11" fill="#e8ecf0" stroke="#666"/><rect x="40" y="1" width="3" height="7" fill="#555"/><rect x="45" y="1" width="3" height="5" fill="#555"/>
</svg>
<div class="st" style="left:674px">100%</div>
<svg class="a" style="left:709px;top:621px" width="134" height="19" viewBox="0 0 134 19">
 <path d="M17 9.5 h104" stroke="#8c96a3"/><path d="M17 10.5 h104" stroke="#fff"/>
 <circle cx="9" cy="9.5" r="7.5" fill="#f3f5f8" stroke="#6c7684"/><path d="M5 9.5h8" stroke="#333" stroke-width="2"/>
 <circle cx="125" cy="9.5" r="7.5" fill="#f3f5f8" stroke="#6c7684"/><path d="M121 9.5h8M125 5.5v8" stroke="#333" stroke-width="2"/>
 <path d="M63 3 h8 v8 l-4 4 -4 -4z" fill="#f5f7fa" stroke="#6c7684"/>
</svg>

<svg class="a" style="left:849px;top:630px" width="12" height="11" viewBox="0 0 12 11">
 <g fill="#8a929c"><rect x="8" y="1" width="2" height="2"/><rect x="5" y="4" width="2" height="2"/><rect x="8" y="4" width="2" height="2"/><rect x="2" y="7" width="2" height="2"/><rect x="5" y="7" width="2" height="2"/><rect x="8" y="7" width="2" height="2"/></g>
</svg>
<!-- dropdown menu -->
<div id="menu"><div class="icol"></div></div>
<svg class="a" style="left:630px;top:120px" width="26" height="136" viewBox="0 0 26 136">
 <text x="5.5" y="10.5" font-size="9.5" font-family="Liberation Serif" font-weight="bold" fill="#2a56a8">A</text>
 <text x="5.5" y="19" font-size="9.5" font-family="Liberation Serif" font-weight="bold" fill="#8a4a3a">Я</text>
 <path d="M17.5 3 v14 M14.5 13 l3 4 3 -4" fill="none" stroke="#111" stroke-width="1.2"/>
 <text x="5.5" y="32.5" font-size="9.5" font-family="Liberation Serif" font-weight="bold" fill="#8a4a3a">Я</text>
 <text x="5.5" y="41" font-size="9.5" font-family="Liberation Serif" font-weight="bold" fill="#2a56a8">A</text>
 <path d="M17.5 25 v14 M14.5 35 l3 4 3 -4" fill="none" stroke="#111" stroke-width="1.2"/>
 <rect x="5.5" y="48.5" width="14" height="13" fill="#eef3fa" stroke="#5a7ab0"/>
 <rect x="6" y="49" width="13" height="2" fill="#9ab6de"/>
 <path d="M9.5 52 v8 M7.5 57.5 l2 2.5 2 -2.5" stroke="#1d55b0" stroke-width="1.2" fill="none"/>
 <path d="M15.5 60 v-8 M13.5 54.5 l2 -2.5 2 2.5" stroke="#c0301e" stroke-width="1.2" fill="none"/>
 <path d="M5 77 h11 l-4 5 v4 l-3 -1.5 v-2.5z" fill="#333" stroke="#111" stroke-width="0.6"/>
 <path d="M7 78 h5 l-2 2.5z" fill="#bbb"/>
 <path d="M16 80.5h4M16 83.5h4" stroke="#111" stroke-width="1.6"/>
 <path d="M5 98 h10 l-4 5 v5 l-2 -1 v-4z" fill="#d3d7dc" stroke="#aab0b8" stroke-width="0.7"/>
 <path d="M12 102 l6 6 M18 102 l-6 6" stroke="#9aa1a9" stroke-width="1.6"/>
 <path d="M5 118 h10 l-4 5 v5 l-2 -1 v-4z" fill="#d3d7dc" stroke="#aab0b8" stroke-width="0.7"/>
 <path d="M12 127 q4 3 7 -1" fill="none" stroke="#9aa1a9" stroke-width="1.8"/><path d="M18 123 l2 3 -3 1z" fill="#9aa1a9"/>
 <path d="M10 131 q4 -3 8 0" fill="none" stroke="#b5bbc2" stroke-width="1.4"/>
</svg>
<div class="mi" style="top:124px">Сортировка от <span class="u">А</span> до Я</div>
<div class="mi" style="top:146px">Сортировка от <span class="u">Я</span> до А</div>
<div class="mi" style="top:168px"><span class="u">Н</span>астраиваемая сортировка...</div>
<div class="a" style="left:664px;top:187px;width:180px;height:1px;background-image:linear-gradient(90deg,#c5c8cc 2px,transparent 2px);background-size:4px 1px"></div>
<div class="mi" style="top:194px"><span class="u">Ф</span>ильтр</div>
<div class="mi dis" style="top:216px">О<span class="u">ч</span>истить</div>
<div class="mi dis" style="top:238px"><span class="u">П</span>овторить</div>

<!-- red rings -->
<div class="ring" style="left:619px;top:45px;width:93px;height:77px;border-width:5px;border-radius:17px"></div>
<div class="ring" style="left:625px;top:185px;width:102px;height:31px;border-radius:10px;border-width:5px"></div>
</body></html>
